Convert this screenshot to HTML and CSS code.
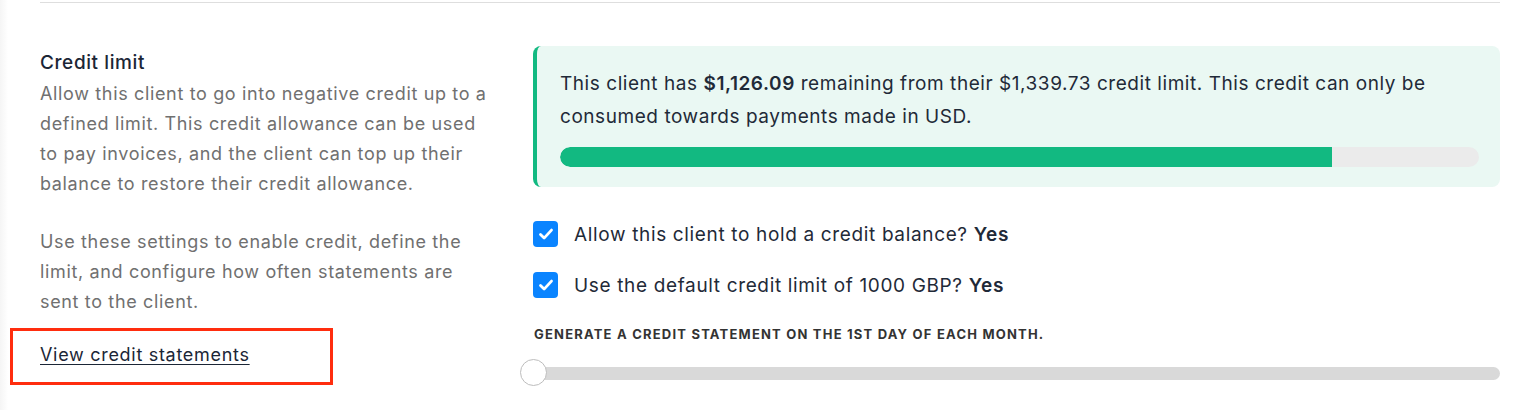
FILE: index.html
```html
<!DOCTYPE html>
<html lang="en">
<head>
<meta charset="utf-8">
<title>Credit limit</title>
<link rel="stylesheet" href="styles.css">
</head>
<body>
<div class="page">
  <section class="section">
    <div class="info">
      <h3 class="title">Credit limit</h3>
      <p class="desc">Allow this client to go into negative credit up to a defined limit. This credit allowance can be used to pay invoices, and the client can top up their balance to restore their credit allowance.</p>
      <p class="desc">Use these settings to enable credit, define the limit, and configure how often statements are sent to the client.</p>
      <div class="link-wrap">
        <a class="link" href="#">View credit statements</a>
      </div>
    </div>
    <div class="settings">
      <div class="notice">
        <p class="notice-text">This client has <strong>$1,126.09</strong> remaining from their $1,339.73 credit limit. This credit can only be consumed towards payments made in USD.</p>
        <div class="progress"><div class="progress-fill" style="width: 84.05%"></div></div>
      </div>
      <label class="check-row">
        <span class="checkbox"><svg viewBox="0 0 24 24" width="24" height="24"><path d="M6.5 12.5l3.6 3.6 7.4-8" fill="none" stroke="#fff" stroke-width="2.8" stroke-linecap="round" stroke-linejoin="round"/></svg></span>
        <span class="check-label">Allow this client to hold a credit balance? <b>Yes</b></span>
      </label>
      <label class="check-row">
        <span class="checkbox"><svg viewBox="0 0 24 24" width="24" height="24"><path d="M6.5 12.5l3.6 3.6 7.4-8" fill="none" stroke="#fff" stroke-width="2.8" stroke-linecap="round" stroke-linejoin="round"/></svg></span>
        <span class="check-label">Use the default credit limit of 1000 GBP? <b>Yes</b></span>
      </label>
      <div class="slider-label">Generate a credit statement on the 1st day of each month.</div>
      <div class="slider">
        <div class="slider-track"></div>
        <div class="slider-thumb"></div>
      </div>
    </div>
  </section>
</div>
</body>
</html>
```

FILE: styles.css
```css
* { box-sizing: border-box; }
html, body { margin: 0; padding: 0; }
body {
  background: #fff;
  font-family: Inter, "Noto Sans", sans-serif;
  color: #1f2937;
  width: 1534px;
  height: 410px;
  overflow: hidden;
  background-image: linear-gradient(to right, #f5f5f5 0, #fbfbfb 5px, #fff 8px);
}
.page {
  padding: 0 34px 0 40px;
}
.section {
  border-top: 1px solid #dedede;
  margin-top: 2px;
  display: grid;
  grid-template-columns: 453px 1fr;
  column-gap: 40px;
  padding-top: 43px;
}
.title {
  margin: 4px 0 3px;
  font-size: 19px;
  font-weight: 500;
  line-height: 26px;
  color: #1b2636;
  letter-spacing: 0.6px;
}
.desc {
  margin: 0 0 28px;
  font-size: 18px;
  line-height: 30px;
  color: #707070;
  letter-spacing: 0.65px;
}
.desc + .desc { margin-bottom: 0; }
.link-wrap {
  margin: 11px 0 0 -30px;
  width: 323px;
  height: 57px;
  border: 3px solid #ff2d0e;
  padding: 10px 0 0 27px;
}
.link {
  font-size: 18px;
  line-height: 28px;
  color: #1b2636;
  letter-spacing: 0.7px;
  text-decoration: underline;
  text-underline-offset: 3px;
  text-decoration-thickness: 1px;
}
.notice {
  background: #eaf8f3;
  border-left: 4px solid #12b981;
  border-radius: 8px;
  padding: 21px 21px 20px 23px;
}
.notice-text {
  margin: 0;
  font-size: 19px;
  line-height: 33px;
  color: #1f2a38;
  letter-spacing: 0.55px;
}
.notice-text strong { font-weight: 600; }
.progress {
  margin-top: 14px;
  height: 20px;
  border-radius: 10px;
  background: #ebebeb;
  overflow: hidden;
}
.progress-fill {
  height: 100%;
  background: #12b981;
  border-radius: 10px 0 0 10px;
}
.check-row {
  display: flex;
  align-items: center;
  gap: 16px;
  height: 26px;
  margin-top: 34px;
}
.check-row + .check-row { margin-top: 25px; }
.checkbox {
  width: 25px;
  height: 26px;
  border-radius: 4px;
  background: #0a84ff;
  display: flex;
  align-items: center;
  justify-content: center;
  flex: none;
}
.check-label {
  font-size: 19px;
  color: #1f2a38;
  letter-spacing: 0.65px;
}
.check-label b { font-weight: 600; }
.slider-label {
  margin-top: 28px;
  padding-left: 1px;
  font-size: 13px;
  font-weight: 700;
  text-transform: uppercase;
  letter-spacing: 1.2px;
  color: #333;
  line-height: 16px;
}
.slider {
  position: relative;
  margin-top: 17px;
  height: 28px;
}
.slider-track {
  position: absolute;
  left: 0;
  right: 0;
  top: 8px;
  height: 13px;
  border-radius: 7px;
  background: #d9d9d9;
}
.slider-thumb {
  position: absolute;
  left: -13px;
  top: 0;
  width: 27px;
  height: 27px;
  border-radius: 50%;
  background: #fff;
  border: 1px solid #bdbdbd;
}
```
